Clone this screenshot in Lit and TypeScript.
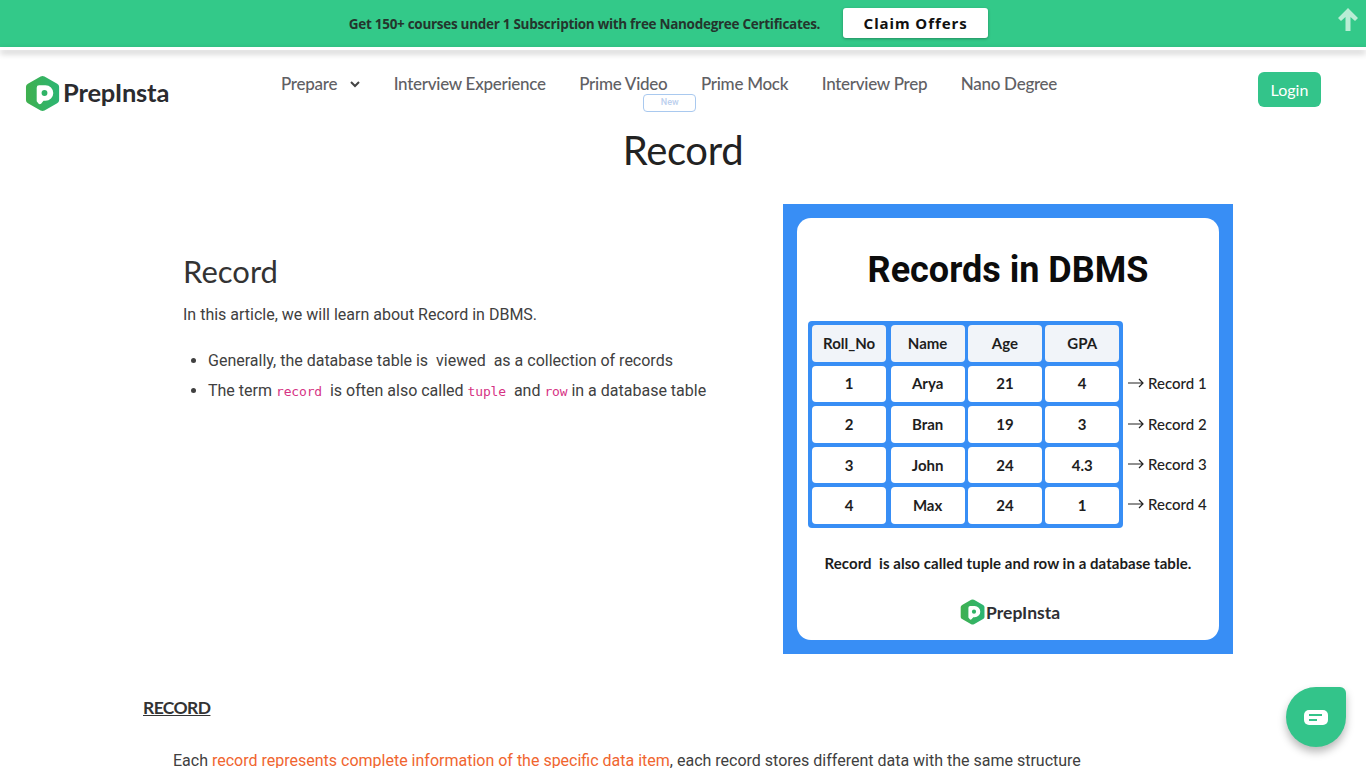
import { LitElement, html, css, svg } from "lit";
import { customElement } from "lit/decorators.js";

const hex = (size: number, cls = "") => html`<svg class=${cls} width=${size * 0.9} height=${size} viewBox="0 0 36 38">
  <defs><linearGradient id="lg" x1="0" x2="1" y1="0" y2="0"><stop offset="0" stop-color="#3fb04f"/><stop offset="1" stop-color="#2cb573"/></linearGradient></defs>
  <path d="M18 1 Q19 1 20 1.6 L33 9 Q35 10 35 12 L35 26 Q35 28 33 29 L20 36.4 Q18 37.4 16 36.4 L3 29 Q1 28 1 26 L1 12 Q1 10 3 9 L16 1.6 Q17 1 18 1Z" fill="url(#lg)"/>
  ${svg`<path d="M12 13 Q12 10.500 14.500 10.500 L21 10.500 A8 8 0 0 1 21 26.500 L19 26.500 L16.500 29.500 Q15 30.500 14 29.500 L12 27 Z" fill="#fff"/><circle cx="20" cy="18.500" r="3" fill="#2fb366"/>`}
</svg>`;

@customElement("app-root")
export class AppRoot extends LitElement {
  static styles = css`
    :host { display: block; height: 768px; overflow: hidden; position: relative; background: #fff; font-family: Roboto, sans-serif; color: #3c3c3c; }
    * { box-sizing: border-box; }
    .banner { height: 47px; background: #33c989; display: flex; align-items: center; justify-content: center; padding: 0 29px 1px 0; gap: 23px; position: relative; }
    .banner-text { font: 700 13.500px "Open Sans", sans-serif; letter-spacing: -0.29px; color: #24352d; margin-top: 1px; }
    .claim { width: 145px; height: 30px; background: #fff; border-radius: 3px; box-shadow: 0 1px 3px rgba(0,0,0,.3); font: 700 15px "Noto Sans", sans-serif; letter-spacing: 0.95px; color: #111; display: flex; align-items: center; justify-content: center; }
    .up { position: absolute; right: 8px; top: 8px; }
    .strip { height: 3px; background: #fff; box-shadow: 0 3px 6px rgba(0,0,0,.3); position: relative; }
    .nav { height: 82px; display: flex; align-items: flex-start; position: relative; }
    .logo { display: flex; align-items: center; gap: 3px; margin: 24px 0 0 25px; width: 256px; font: 700 25.500px Lato, sans-serif; letter-spacing: -0.2px; color: #2b2b2f; height: 38px; }
    .logo span { padding-bottom: 2px; }
    .menu { display: flex; gap: 33.500px; margin-top: 23px; font: 500 17px Lato, sans-serif; letter-spacing: -0.27px; color: #606064; }
    .menu span { position: relative; line-height: 22px; white-space: nowrap; }
    .prep { display: flex; align-items: center; gap: 13px; }
    .new { position: absolute; left: 64px; top: 21px; width: 53px; height: 18px; border: 1px solid #a9c9ef; border-radius: 4px; background: #fff; font: 500 9px Roboto, sans-serif; letter-spacing: 0; color: #bcd0ee; text-align: center; line-height: 15px; }
    .login { position: absolute; left: 1258px; top: 22px; width: 63px; height: 35px; border-radius: 6px; background: #33c48a; color: #fff; font: 400 16px Lato, sans-serif; display: flex; align-items: center; justify-content: center; }
    h1 { margin: -9px 0 0; text-align: center; font: 400 40px Lato, sans-serif; letter-spacing: -0.35px; line-height: 54px; color: #222; }
    .cols { display: flex; margin: 27px 133px 0 143px; height: 450px; justify-content: space-between; }
    .left { width: 600px; padding: 48px 0 0 40px; }
    h2 { margin: 0; font: 400 31px Lato, sans-serif; line-height: 38px; color: #333; }
    .left p { margin: 13px 0 0; font-size: 16px; line-height: 24px; color: #404040; }
    ul { margin: 19px 0 0; padding: 0 0 0 25px; font-size: 16px; line-height: 30px; color: #404040; }
    code { font: 400 13px "DejaVu Sans Mono", monospace; color: #d63384; letter-spacing: -0.15px; }
    .art { width: 450px; height: 450px; background: #388ef5; padding: 14px; }
    .card { height: 422px; background: #fff; border-radius: 14px; display: flex; flex-direction: column; align-items: center; font-family: Lato, sans-serif; color: #111; }
    .art-title { font: 700 36px Roboto, sans-serif; color: #0c0c0c; line-height: 42px; margin-top: 31px; }
    .table-row { display: flex; align-self: flex-start; margin: 30px 0 0 11px; }
    .grid { display: grid; grid-template-columns: 75.300px 74px 74px 74px; gap: 4px 3.300px; grid-auto-rows: 36.600px; padding: 4px; background: #388ef5; border-radius: 4px; width: 315px; height: 207px; }
    .grid div { background: #fff; border-radius: 4px; display: flex; align-items: center; justify-content: center; padding-bottom: 1px; font-size: 15px; font-weight: 700; color: #1e1e1e; }
    .grid div:nth-child(4n+1) { margin-right: 1px; }
    .grid div.h { background: #f1f4f9; padding-bottom: 0; }
    .labels { display: flex; flex-direction: column; padding-top: 42px; margin-left: 5px; }
    .labels div { height: 40.400px; display: flex; align-items: center; gap: 4px; font-size: 15px; font-weight: 500; color: #222; white-space: nowrap; }
    .note { font-size: 15px; letter-spacing: 0.05px; font-weight: 700; margin-top: 25px; line-height: 20px; color: #1c1c1c; white-space: pre; }
    .art-logo { display: flex; align-items: center; gap: 1px; margin: 25px 0 0 4px; font: 700 17.500px Lato, sans-serif; color: #2f2f33; }
    h3 { margin: 42px 0 0 143px; font: 700 17.500px Lato, sans-serif; letter-spacing: -0.6px; text-decoration: underline; line-height: 24px; color: #333; }
    .para { margin: 33px 0 0 173px; font-size: 16px; line-height: 16px; white-space: nowrap; color: #404040; }
    .para a { color: #f0652f; }
    .chat { position: absolute; left: 1286px; top: 687px; width: 60px; height: 60px; background: #33c48a; border-radius: 50% 6px 50% 50%; box-shadow: 0 5px 9px rgba(0,0,0,.28); display: flex; align-items: center; justify-content: center; }
  `;

  private rows = [["1","Arya","21","4"],["2","Bran","19","3"],["3","John","24","4.3"],["4","Max","24","1"]];

  render() {
    return html`
      <div class="banner">
        <span class="banner-text">Get 150+ courses under 1 Subscription with free Nanodegree Certificates.</span>
        <span class="claim">Claim Offers</span>
        <svg class="up" width="20" height="23" viewBox="0 0 20 23"><path d="M10 0 L20 10 L17 13 L12.500 9 V23 H7.500 V9 L3 13 L0 10 Z" fill="#b9edd5"/></svg>
      </div>
      <div class="strip"></div>
      <div class="nav">
        <div class="logo">${hex(39)}<span>PrepInsta</span></div>
        <div class="menu">
          <span class="prep">Prepare <svg width="10" height="7" viewBox="0 0 10 7"><path d="M1 1 L5 5 L9 1" fill="none" stroke="#444" stroke-width="2"/></svg></span>
          <span>Interview Experience</span>
          <span>Prime Video<i class="new">New</i></span>
          <span>Prime Mock</span>
          <span>Interview Prep</span>
          <span>Nano Degree</span>
        </div>
        <div class="login">Login</div>
      </div>
      <h1>Record</h1>
      <div class="cols">
        <div class="left">
          <h2>Record</h2>
          <p>In this article, we will learn about Record in DBMS.</p>
          <ul>
            <li>Generally, the database table is&nbsp; viewed&nbsp; as a collection of records</li>
            <li>The term <code>record</code>&nbsp; is often also called <code>tuple</code>&nbsp; and <code>row</code> in a database table</li>
          </ul>
        </div>
        <div class="art">
          <div class="card">
            <div class="art-title">Records in DBMS</div>
            <div class="table-row">
              <div class="grid">
                ${["Roll_No","Name","Age","GPA"].map(h => html`<div class="h">${h}</div>`)}
                ${this.rows.flat().map(c => html`<div>${c}</div>`)}
              </div>
              <div class="labels">
                ${[1,2,3,4].map(n => html`<div><svg width="16" height="10" viewBox="0 0 16 10"><path d="M0 5 H15 M11 1 L15 5 L11 9" fill="none" stroke="#222" stroke-width="1.200"/></svg>Record ${n}</div>`)}
              </div>
            </div>
            <div class="note">Record  is also called tuple and row in a database table.</div>
            <div class="art-logo">${hex(28)}<span>PrepInsta</span></div>
          </div>
        </div>
      </div>
      <h3>RECORD</h3>
      <div class="para">Each <a>record represents complete information of the specific data item</a>, each record stores different data with the same structure</div>
      <div class="chat"><svg width="24" height="15" viewBox="0 0 24 15"><rect width="24" height="15" rx="5" fill="#fff"/><path d="M5 5 H18 M5 10 H13" stroke="#33c48a" stroke-width="2"/></svg></div>
    `;
  }
}
